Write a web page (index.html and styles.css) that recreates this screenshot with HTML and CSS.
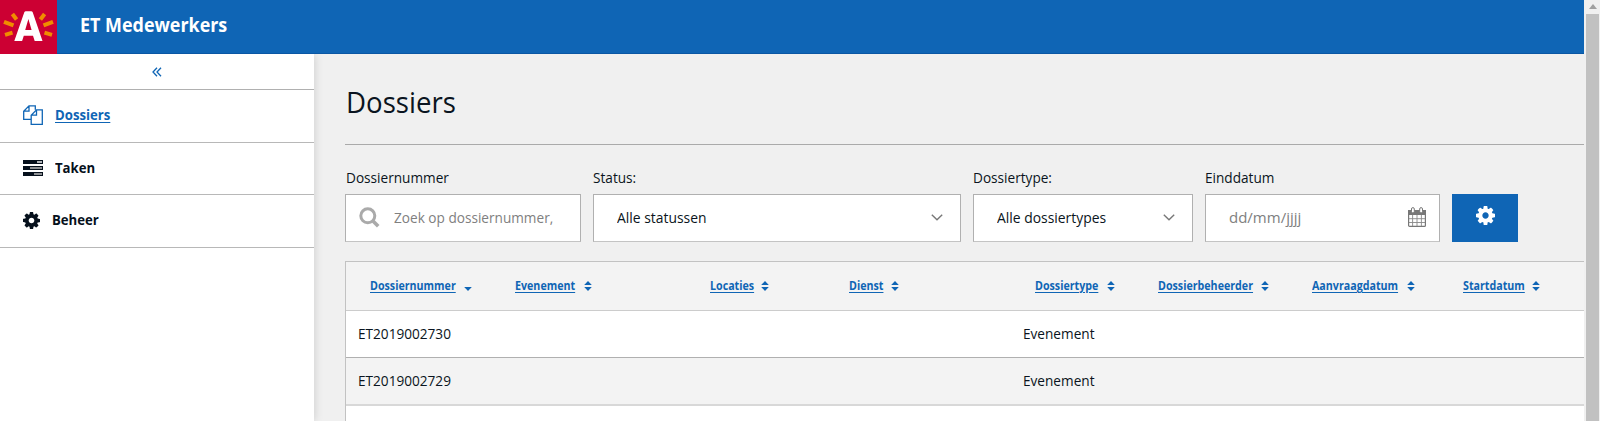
FILE: index.html
```html
<!DOCTYPE html>
<html lang="nl">
<head>
<meta charset="utf-8">
<title>ET Medewerkers</title>
<link rel="stylesheet" href="styles.css">
</head>
<body>
<svg class="defs" width="0" height="0" aria-hidden="true">
  <symbol id="gear" viewBox="0 0 1536 1536"><path d="M1024 768q0-106-75-181t-181-75-181 75-75 181 75 181 181 75 181-75 75-181zm512-109v222q0 12-8 23t-20 13l-185 28q-19 54-39 91 35 50 107 138 10 12 10 25t-9 23q-27 37-99 108t-94 71q-12 0-26-9l-138-108q-44 23-91 38-16 136-29 186-7 28-36 28H657q-14 0-24.500-8.500T621 1506l-28-184q-49-16-90-37l-141 107q-10 9-25 9-14 0-25-11-126-114-165-168-7-10-7-23 0-12 8-23 15-21 51-66.500t54-70.500q-27-50-41-99L29 913q-13-2-21-12.500T0 877V655q0-12 8-23t19-13l186-28q14-46 39-92-40-57-107-138-10-12-10-24 0-10 9-23 26-36 98.500-107.500T337 135q13 0 26 10l138 107q44-23 91-38 16-136 29-186 7-28 36-28h222q14 0 24.500 8.500T915 30l28 184q49 16 90 37l142-107q9-9 24-9 13 0 25 10 129 119 165 170 7 8 7 22 0 12-8 23-15 21-51 66.500t-54 70.500q26 50 41 98l183 28q13 2 21 12.500t8 23.500z"/></symbol>
  <symbol id="chev" viewBox="0 0 12 7"><path d="M.8.8 6 5.800 11.200.8" fill="none" stroke="currentColor" stroke-width="1.400"/></symbol>
  <symbol id="sort" viewBox="0 0 8 10"><path d="M4 0 7.800 4H.2zM4 10 7.800 6H.2z"/></symbol>
  <symbol id="sortdown" viewBox="0 0 8 10"><path d="M4 10 7.800 6H.2z"/></symbol>
</svg>
<div class="app">
  <header class="topbar">
    <svg class="logo" viewBox="0 0 57 54"><path fill="#c03" d="M0 0h57v54H0z"/><path fill="#fff" fill-rule="evenodd" d="M24.300 12.300q.5-1 1.500-1h5.400q1 0 1.500 1L42.500 41h-7.800L33 35.800h-9.200L22.100 41h-7.800zM28.400 19 25.200 30h6.400z"/><g stroke="#f08c00" stroke-width="4"><path d="m12.400 14 4.200 5.500M4 21.800l9.500 3.600M5 34.800l7.500-2.200M44.600 14l-4.200 5.500M53 21.800l-9.500 3.600M52 34.800l-7.500-2.200"/></g></svg>
    <h1 class="brand"><span class="t">ET Medewerkers</span></h1>
  </header>
  <div class="body">
    <nav class="side">
      <a class="collapse"><svg class="line" width="10" height="10" viewBox="0 0 10 10"><path d="M5 .7 1 5l4 4.300M9 .7 5 5l4 4.300" stroke-width="1.300"/></svg></a>
      <a class="item active"><svg class="line" width="20" height="20" viewBox="0 0 20 20" stroke-width="1.300"><path d="M8.200 14.300H.7V6.200L6 .8h6.300v4M.7 6.200H6V.8M8.200 10.200V19.300h11.100V4.800H13.500zM8.200 10.200h5.300V4.800"/></svg><span class="t">Dossiers</span></a>
      <a class="item"><svg width="20" height="16" viewBox="0 0 20 16"><path d="M0 0h20v4H0zM0 6h20v4H0zM0 12h20v4H0z"/><path fill="#fff" d="M14 1.300h5v1.400h-5z"/><path fill="#bbb" d="M7 7.300h12v1.400H7zM11 13.300h8v1.400h-8z"/></svg><span class="t">Taken</span></a>
      <a class="item"><svg width="17" height="17"><use href="#gear"/></svg><span class="t">Beheer</span></a>
    </nav>
    <main class="main">
      <h2 class="title"><span class="t">Dossiers</span></h2>
      <form class="filters">
        <div class="field number"><label><span class="t">Dossiernummer</span></label>
          <div class="box"><svg class="search line" width="21" height="21" viewBox="0 0 21 21" stroke-width="3"><circle cx="8.800" cy="8.800" r="7"/><path d="m13.700 13.700 5.500 5.500" stroke-width="3.600"/></svg><span class="t hint">Zoek op dossiernummer,</span></div></div>
        <div class="field status"><label><span class="t">Status:</span></label>
          <div class="box select"><span class="t wide">Alle statussen</span><svg width="12" height="7"><use href="#chev"/></svg></div></div>
        <div class="field type"><label><span class="t">Dossiertype:</span></label>
          <div class="box select"><span class="t wide">Alle dossiertypes</span><svg width="12" height="7"><use href="#chev"/></svg></div></div>
        <div class="field date"><label><span class="t">Einddatum</span></label>
          <div class="box select cal"><span class="hint">dd/mm/jjjj</span><svg width="18" height="20" viewBox="0 0 18 20"><rect x=".6" y="3.600" width="16.800" height="15.800" rx="1" fill="#fff" stroke="#777" stroke-width="1.200"/><path fill="#777" d="M0 3h18v5H0z"/><path d="M4.600 8v11M9 8v11M13.400 8v11M1 11.700h16M1 15.500h16" stroke="#888" stroke-width=".9"/><rect x="3.500" y=".6" width="2.800" height="5.400" rx="1.400" fill="#fff" stroke="#777"/><rect x="11.700" y=".6" width="2.800" height="5.400" rx="1.400" fill="#fff" stroke="#777"/></svg></div></div>
        <button class="btn" type="button"><svg width="19" height="19"><use href="#gear"/></svg></button>
      </form>
      <div class="table">
        <div class="row head">
          <div><a class="t">Dossiernummer</a><svg width="8" height="10"><use href="#sortdown"/></svg></div>
          <div><a class="t">Evenement</a><svg width="8" height="10"><use href="#sort"/></svg></div>
          <div><a class="t">Locaties</a><svg width="8" height="10"><use href="#sort"/></svg></div>
          <div><a class="t">Dienst</a><svg width="8" height="10"><use href="#sort"/></svg></div>
          <div><a class="t">Dossiertype</a><svg width="8" height="10"><use href="#sort"/></svg></div>
          <div><a class="t">Dossierbeheerder</a><svg width="8" height="10"><use href="#sort"/></svg></div>
          <div><a class="t">Aanvraagdatum</a><svg width="8" height="10"><use href="#sort"/></svg></div>
          <div><a class="t">Startdatum</a><svg width="8" height="10"><use href="#sort"/></svg></div>
          <div></div>
        </div>
        <div class="row"><div><span class="t">ET2019002730</span></div><div></div><div></div><div></div><div><span class="t">Evenement</span></div></div>
        <div class="row alt"><div><span class="t">ET2019002729</span></div><div></div><div></div><div></div><div><span class="t">Evenement</span></div></div>
        <div class="row"></div>
      </div>
    </main>
  </div>
</div>
<div class="scroll"><svg width="8" height="5" viewBox="0 0 8 5"><path d="M4 0l4 5H0z" fill="#a0a0a0"/></svg><div class="thumb"></div></div>
</body>
</html>
```
FILE: styles.css
```css
* { box-sizing: border-box; }
body { margin: 0; display: flex; height: 421px; overflow: hidden; background: #f0f0f0; color: #0a1420; font: 15px/20px "Open Sans", "Noto Sans", sans-serif; }
svg { display: block; flex: none; fill: currentColor; }
.line { fill: none; stroke: currentColor; }
.defs { position: absolute; }
h1, h2 { margin: 0; }
.t { display: inline-block; white-space: nowrap; transform: scaleX(.908); transform-origin: 0 50%; }
.t.wide { transform: scaleX(.926); }
.app { width: 1584px; flex: none; display: flex; flex-direction: column; overflow: hidden; }
.topbar { height: 54px; flex: none; background: #0f65b5; display: flex; border-bottom: 1px solid #0a57a4; }
.logo { width: 57px; height: 54px; }
.brand { color: #fff; font-size: 19px; line-height: 51px; font-weight: 700; margin-left: 23px; }
.brand .t { transform: scaleX(.943); }
.body { display: flex; flex: 1; min-height: 0; }
.side { width: 314px; flex: none; background: #fff; box-shadow: 0 0 9px rgba(0,0,0,.16); clip-path: inset(0 -12px 0 0); }
.collapse { display: flex; height: 36px; border-bottom: 1px solid #b0b0b0; color: #0f65b5; align-items: center; padding-left: 152px; }
.item { display: flex; align-items: center; height: 52.500px; border-bottom: 1px solid #b8b8b8; padding: 0 0 1px 23px; gap: 12px; font-size: 14.500px; font-weight: 700; color: #06101c; }
.active { color: #0f65b5; }
.active .t, .head a { text-decoration: underline; text-underline-offset: 2px; text-decoration-thickness: 1px; }
.main { flex: 1; min-width: 0; padding-left: 31px; }
.title { height: 91px; border-bottom: 1px solid #aaa; font-size: 30px; font-weight: 400; line-height: 95px; padding-left: 1px; }
.title .t { transform: scaleX(.92); }
.filters { display: flex; gap: 12px; align-items: flex-end; height: 97px; }
.field { flex: none; }
.number { width: 236px; } .status { width: 368px; } .type { width: 220px; } .date { width: 235px; }
label { display: block; height: 27px; line-height: 20px; }
.number label { padding-left: 1px; }
.box { height: 48px; border: 1px solid #b0b0b0; border-bottom-color: #c4c4c4; background: #fff; display: flex; align-items: center; padding-bottom: 2px; }
.search { color: #aaa; margin-left: 13px; margin-right: 14px; }
.hint { color: #808080; }
.number .hint { width: 158px; }
.select { justify-content: space-between; padding: 0 17px 2px 23px; color: #0a1420; }
.select svg { color: #777; }
.cal { padding-right: 13px; }
.btn { width: 66px; height: 48px; border: 0; padding: 0 0 5px; background: #0f65b5; color: #fff; display: flex; align-items: center; justify-content: center; }
.table { margin-top: 19px; border: 1px solid #c2c2c2; border-right: 0; border-bottom: 0; }
.row { display: grid; grid-template-columns: 145px 195px 139px 186px 123px 154px 151px 120px 25px; height: 47px; background: #fff; border-bottom: 1px solid #b0b0b0; align-items: center; overflow: hidden; padding-bottom: 3px; }
.row > div { padding-left: 12px; }
.alt, .head { background: #f3f3f3; }
.alt { height: 48px; border-bottom: 2px solid #d8d8d8; }
.head { height: 49px; font-size: 12px; font-weight: 700; color: #0f65b5; border-bottom: 1px solid #ccc; padding: 0; }
.head > div { display: flex; align-items: center; gap: 8px; padding-left: 24px; }
.head .t { flex: none; transform: scaleX(.89); }
.head > :nth-child(1) .t { width: 86px; }
.head > :nth-child(2) .t { width: 61px; }
.head > :nth-child(3) .t { width: 43px; }
.head > :nth-child(4) .t { width: 34px; }
.head > :nth-child(5) .t { width: 64px; }
.head > :nth-child(6) .t { width: 95px; }
.head > :nth-child(7) .t { width: 87px; }
.head > :nth-child(8) .t { width: 61px; }
.scroll { width: 16px; flex: none; display: flex; flex-direction: column; align-items: center; background: #f0f0f0; padding: 4px 0 0 1px; gap: 5px; }
.thumb { width: 13px; flex: 1; background: #c1c1c1; }
```
